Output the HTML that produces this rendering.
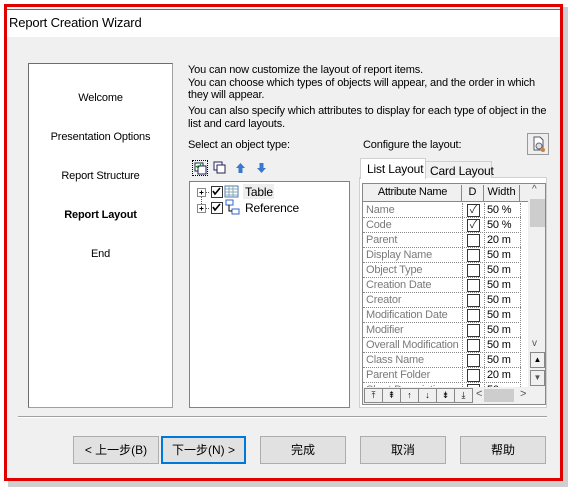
<!DOCTYPE html>
<html><head><meta charset="utf-8"><style>
*{margin:0;padding:0;box-sizing:border-box}
body{width:570px;height:488px;background:#fff;position:relative;overflow:hidden;font-family:"Liberation Sans","Noto Sans CJK SC",sans-serif;font-size:11px;color:#000}
.a{position:absolute}
.t{position:absolute;white-space:nowrap;letter-spacing:-0.15px}
.btn{position:absolute;top:436px;height:28px;background:#e1e1e1;border:1px solid #adadad;text-align:center;line-height:26px;font-size:12px}
.row{position:absolute;left:0;width:158px;height:15px;border-bottom:1px dotted #888}
.row .n{position:absolute;left:3px;top:1px;color:#7a7a7a;letter-spacing:-0.2px;white-space:nowrap}
.row .c{position:absolute;left:104px;top:1px;width:13px;height:13px;border:1px solid #333;background:#fff;font-size:11px;line-height:11px;text-align:center;color:#333}
.row .w{position:absolute;left:124px;top:1px;color:#000;letter-spacing:-0.2px}
.tb{position:absolute;top:0;width:19px;height:15px;border:1px solid #888;background:#f0f0f0;font-size:9px;text-align:center;line-height:13px}
</style></head><body>
<div class="a" style="left:8px;top:7px;width:560px;height:480px;background:#a0a0a0;opacity:.5"></div>
<div class="a" style="left:4px;top:4px;width:559px;height:477px;border:3px solid #e00000;background:#f0f0f0"></div>
<div class="a" style="left:7px;top:9px;width:553px;height:28px;background:#fff;border-top:1px solid #1c7ac8"></div>
<div class="t" style="left:9px;top:15px;font-size:13px">Report Creation Wizard</div>

<div class="a" style="left:28px;top:63px;width:145px;height:345px;background:#fff;border:1px solid #a0a0a0;border-top-color:#6d6d6d;border-left-color:#6d6d6d"></div>
<div class="t" style="left:28px;width:145px;text-align:center;top:92px">Welcome</div>
<div class="t" style="left:28px;width:145px;text-align:center;top:131px">Presentation Options</div>
<div class="t" style="left:28px;width:145px;text-align:center;top:170px">Report Structure</div>
<div class="t" style="left:28px;width:145px;text-align:center;top:209px;font-weight:bold">Report Layout</div>
<div class="t" style="left:28px;width:145px;text-align:center;top:248px">End</div>

<div class="t" style="left:188px;top:64px;line-height:12.5px">You can now customize the layout of report items.<br>You can choose which types of objects will appear, and the order in which<br>they will appear.</div>
<div class="t" style="left:188px;top:105px;line-height:13px">You can also specify which attributes to display for each type of object in the<br>list and card layouts.</div>
<div class="t" style="left:188px;top:139px">Select an object type:</div>
<div class="t" style="left:363px;top:139px">Configure the layout:</div>
<div class="a" style="left:527px;top:133px;width:22px;height:22px;border:1px solid #999;background:#eee"><svg width="20" height="20"><path d="M6 3h6l3 3v10H6z" fill="#fff" stroke="#556"/><circle cx="11" cy="12" r="3" fill="#dde" stroke="#666"/><circle cx="15" cy="16" r="2" fill="#d08030"/></svg></div>

<div class="a" style="left:192px;top:160px;width:16px;height:16px;border:1px dotted #000"><svg width="14" height="14"><rect x="2" y="2" width="8" height="8" fill="#fff" stroke="#225"/><rect x="5" y="5" width="8" height="8" fill="#fff" stroke="#225"/><path d="M3 5l2 2 3-4" stroke="#080" fill="none"/></svg></div>
<svg class="a" style="left:213px;top:161px" width="14" height="14"><rect x="1" y="1" width="8" height="8" fill="#fff" stroke="#225"/><rect x="4" y="4" width="8" height="8" fill="#fff" stroke="#225"/></svg>
<svg class="a" style="left:235px;top:162px" width="11" height="12"><path d="M5.5 1L10 6H7.5v5h-4V6H1z" fill="#3a78d0"/></svg>
<svg class="a" style="left:256px;top:162px" width="11" height="12"><path d="M5.5 11L10 6H7.5V1h-4v5H1z" fill="#3a78d0"/></svg>

<div class="a" style="left:189px;top:181px;width:161px;height:227px;background:#fff;border:1px solid #828282"></div>
<svg class="a" style="left:196px;top:185px" width="50" height="32"><rect x="1.5" y="3.5" width="8" height="8" fill="#fff" stroke="#888"/><path d="M3.5 7.5h4" stroke="#000"/><path d="M5.5 5.5v4" stroke="#000"/><rect x="1.5" y="19.5" width="8" height="8" fill="#fff" stroke="#888"/><path d="M3.5 23.5h4M5.5 21.5v4" stroke="#000"/><path d="M5.5 12v7M10 7.5h4M10 23.5h4" stroke="#555" stroke-dasharray="1 1"/><rect x="15.5" y="1.5" width="11" height="11" fill="#fff" stroke="#333"/><path d="M17 6l2 3 5-6" stroke="#000" stroke-width="1.6" fill="none"/><rect x="15.5" y="17.5" width="11" height="11" fill="#fff" stroke="#333"/><path d="M17 22l2 3 5-6" stroke="#000" stroke-width="1.6" fill="none"/><rect x="29" y="1" width="13" height="11" fill="#fff" stroke="#5577aa"/><path d="M29 4h13M29 7h13M29 10h13M33 1v11M37 1v11" stroke="#8ab"/><rect x="30" y="15" width="7" height="5" fill="#fff" stroke="#3366cc"/><rect x="36" y="24" width="7" height="5" fill="#fff" stroke="#3366cc"/><path d="M33 20v6h3" stroke="#000" fill="none"/></svg>
<div class="a" style="left:243px;top:184px;width:31px;height:15px;background:#eee"></div>
<div class="t" style="left:245px;top:185px;font-size:12px">Table</div>
<div class="t" style="left:245px;top:201px;font-size:12px">Reference</div>

<div class="a" style="left:359px;top:177px;width:188px;height:231px;border:1px solid #d0d0d0;background:#fff"></div>
<div class="a" style="left:425px;top:161px;width:67px;height:17px;border:1px solid #d0d0d0;border-bottom:none;background:#f0f0f0"></div>
<div class="t" style="left:430px;top:164px;font-size:12px">Card Layout</div>
<div class="a" style="left:360px;top:158px;width:66px;height:21px;border:1px solid #d0d0d0;border-bottom:none;background:#fff"></div>
<div class="t" style="left:367px;top:162px;font-size:12px">List Layout</div>

<div class="a" style="left:362px;top:183px;width:184px;height:222px;border:1px solid #888;background:#f0f0f0;overflow:hidden">
 <div class="a" style="left:0;top:0;width:165px;height:220px;background:#fff"></div>
 <div class="a" style="left:0;top:0;width:165px;height:18px;background:#f0f0f0;border-bottom:1px solid #888"></div>
 <div class="a" style="left:1px;top:1px;width:98px;height:16px;border-right:1px solid #888;text-align:center;line-height:15px;letter-spacing:-0.3px">Attribute Name</div>
 <div class="a" style="left:99px;top:1px;width:22px;height:16px;border-right:1px solid #888;text-align:center;line-height:15px">D</div>
 <div class="a" style="left:121px;top:1px;width:36px;height:16px;border-right:1px solid #888;text-align:center;line-height:15px">Width</div>
 <div class="a" style="left:0;top:19px;width:160px;height:202px">
  <div class="row" style="top:0"><span class="n">Name</span><span class="c">✓</span><span class="w">50 %</span></div>
  <div class="row" style="top:15px"><span class="n">Code</span><span class="c">✓</span><span class="w">50 %</span></div>
  <div class="row" style="top:30px"><span class="n">Parent</span><span class="c"></span><span class="w">20 m</span></div>
  <div class="row" style="top:45px"><span class="n">Display Name</span><span class="c"></span><span class="w">50 m</span></div>
  <div class="row" style="top:60px"><span class="n">Object Type</span><span class="c"></span><span class="w">50 m</span></div>
  <div class="row" style="top:75px"><span class="n">Creation Date</span><span class="c"></span><span class="w">50 m</span></div>
  <div class="row" style="top:90px"><span class="n">Creator</span><span class="c"></span><span class="w">50 m</span></div>
  <div class="row" style="top:105px"><span class="n">Modification Date</span><span class="c"></span><span class="w">50 m</span></div>
  <div class="row" style="top:120px"><span class="n">Modifier</span><span class="c"></span><span class="w">50 m</span></div>
  <div class="row" style="top:135px"><span class="n">Overall Modification</span><span class="c"></span><span class="w">50 m</span></div>
  <div class="row" style="top:150px"><span class="n">Class Name</span><span class="c"></span><span class="w">50 m</span></div>
  <div class="row" style="top:165px"><span class="n">Parent Folder</span><span class="c"></span><span class="w">20 m</span></div>
  <div class="row" style="top:180px"><span class="n">Short Description</span><span class="c"></span><span class="w">50 m</span></div>
  <div class="a" style="left:99px;top:0;width:0;height:200px;border-left:1px dotted #888"></div>
  <div class="a" style="left:121px;top:0;width:0;height:200px;border-left:1px dotted #888"></div>
  <div class="a" style="left:157px;top:0;width:0;height:200px;border-left:1px dotted #888"></div>
 </div>
 <div class="a" style="left:165px;top:0;width:18px;height:220px;background:#f0f0f0"></div>
 <div class="t" style="left:169px;top:0;font-size:10px;color:#555">^</div>
 <div class="a" style="left:167px;top:15px;width:15px;height:28px;background:#cdcdcd"></div>
 <div class="t" style="left:169px;top:154px;font-size:10px;color:#555">v</div>
 <div class="a" style="left:167px;top:168px;width:15px;height:16px;border:1px solid #888;background:#f0f0f0;font-size:8px;text-align:center;line-height:14px">▲</div>
 <div class="a" style="left:167px;top:186px;width:15px;height:16px;border:1px solid #888;background:#f0f0f0;font-size:8px;text-align:center;line-height:14px;color:#555">▼</div>
 <div class="a" style="left:0;top:203px;width:184px;height:18px;background:#f0f0f0"></div>
 <div class="a" style="left:1px;top:204px">
  <div class="tb" style="left:0">⤒</div><div class="tb" style="left:18px">⇞</div><div class="tb" style="left:36px">↑</div><div class="tb" style="left:54px">↓</div><div class="tb" style="left:72px">⇟</div><div class="tb" style="left:90px">⤓</div>
 </div>
 <div class="t" style="left:113px;top:204px;color:#555">&lt;</div>
 <div class="a" style="left:121px;top:205px;width:30px;height:13px;background:#cdcdcd"></div>
 <div class="t" style="left:157px;top:204px;color:#555">&gt;</div>
</div>

<div class="a" style="left:18px;top:416px;width:529px;height:2px;border-top:1px solid #a0a0a0;border-bottom:1px solid #fff"></div>
<div class="btn" style="left:73px;width:86px">&lt; 上一步(B)</div>
<div class="btn" style="left:161px;width:85px;border:2px solid #0078d7;line-height:24px">下一步(N) &gt;</div>
<div class="btn" style="left:260px;width:86px">完成</div>
<div class="btn" style="left:360px;width:86px">取消</div>
<div class="btn" style="left:460px;width:86px">帮助</div>
</body></html>
